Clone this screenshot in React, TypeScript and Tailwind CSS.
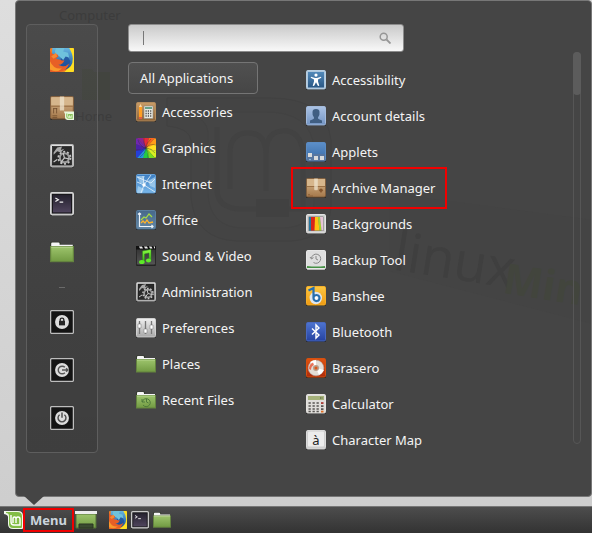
import type { ReactNode } from "react";

type IconProps = { className?: string };

function Svg({ className = "size-5", children }: { className?: string; children: ReactNode }) {
  return (
    <svg viewBox="0 0 20 20" className={`${className} shrink-0`} aria-hidden="true">
      {children}
    </svg>
  );
}

function Gradient({ id, from, to }: { id: string; from: string; to: string }) {
  return (
    <linearGradient id={id} x1="0" y1="0" x2="0" y2="1">
      <stop offset="0" stopColor={from} />
      <stop offset="1" stopColor={to} />
    </linearGradient>
  );
}

function SharedGradients() {
  return (
    <svg width="0" height="0" className="absolute" aria-hidden="true">
      <defs>
        <Gradient id="silver" from="#f0f0f0" to="#a8a8a8" />
        <Gradient id="wood" from="#c99d68" to="#8c6237" />
        <Gradient id="box" from="#d8b88e" to="#a5784a" />
        <Gradient id="sky" from="#3d7fc4" to="#79b7ea" />
        <Gradient id="steel" from="#46688b" to="#6487a5" />
        <Gradient id="leaf" from="#9dc46c" to="#719a42" />
        <Gradient id="coal" from="#303030" to="#555555" />
        <Gradient id="access" from="#5289b9" to="#2a5885" />
        <Gradient id="pale" from="#abc3e4" to="#7394c3" />
        <Gradient id="applet" from="#5c8fc9" to="#386aa5" />
        <Gradient id="amber" from="#fbc743" to="#ef9b13" />
        <Gradient id="blue" from="#4e74d0" to="#2542a0" />
        <Gradient id="orange" from="#df5310" to="#ad2b0c" />
        <Gradient id="night" from="#24212d" to="#51465f" />
        <Gradient id="globe" from="#67b6df" to="#164c9c" />
        <Gradient id="note" from="#8cff43" to="#2fa511" />
      </defs>
    </svg>
  );
}

function Tile({ fill, stroke = "#292929" }: { fill: string; stroke?: string }) {
  return (
    <>
      <rect x="0" y="1" width="20" height="19" rx="1.5" fill="#202020" />
      <rect x="0.5" y="0.5" width="19" height="18.5" rx="1.3" fill={fill} stroke={stroke} />
    </>
  );
}

function Firefox({ className }: IconProps) {
  return (
    <Svg className={className}>
      <rect width="20" height="20" rx="1" fill="#ef7d22" />
      <path d="M14 0h5q1 0 1 1v18q0 1-1 1h-7q6-5 6-11-1-5-4-9" fill="#ffdf22" />
      <path d="M2 0h14q3 5 3 9 0 7-6 9-8 1-10-6Q1 5 2 0" fill="url(#globe)" />
      <path d="M10 5q5 1 7 6-1 5-6 6-4-4-1-12" fill="#1b4a96" opacity=".7" />
      <path d="M5 0h7l-1 3 4 1 1 4-3-1-2 3-3-3-3-1-1-3z" fill="#6fc2dc" />
      <path d="M0 2q1 3 4 3 3 0 3 2L5 9l4 1q2 1 3 0-1 4-5 4 5 3 9-1-2 6-8 7H1q-1 0-1-1z" fill="#e75f26" />
      <path d="M0 11q3 7 10 6-4 4-10 1z" fill="#f99a2b" />
      <path d="M1 7l4-3 1 3-3 2z" fill="#f58a35" />
    </Svg>
  );
}

function PackageBox({ className, mint = false }: IconProps & { mint?: boolean }) {
  return (
    <Svg className={className}>
      <Tile fill="url(#box)" stroke="#82603f" />
      <path d="M1 1h18v7H1z" fill="#d6b68c" />
      <path d="M1 8.5h18" stroke="#9a7045" />
      <path d="M8.2.5h3.6v11l-.9.9-.9-.7-.9.7-.9-.9z" fill="#eee3ce" opacity=".75" />
      {mint ? (
        <>
          <path d="M3 10.5h3M3 10v4.5M5.5 10v4.5M2 16.5h4M2 18h4" stroke="#72502e" strokeWidth=".7" fill="none" />
          <path d="M11.5 13H20v7h-5.5q-2 0-2-2v-3z" fill="#e9f7db" />
          <path d="M14 14.5V17q0 1.5 1.5 1.5h3v-3h-3V17M17 15.5V17" fill="none" stroke="#88c158" strokeWidth=".9" />
        </>
      ) : (
        <path d="M14 11h2v1h1l-2 2.5L13 12h1zM2 16.5h2M2 18h5" fill="#84552d" stroke="#84552d" strokeWidth=".6" />
      )}
    </Svg>
  );
}

function Gears({ className }: IconProps) {
  return (
    <Svg className={className}>
      <Tile fill="url(#silver)" stroke="#b9b9b9" />
      <rect x="2" y="2" width="16" height="15.5" fill="#2a2a2a" stroke="#151515" strokeWidth=".5" />
      <path d="M3 7l3-4 4-1-1 3 3-1-3 3-3-1-3 3z" fill="#a9a9a9" />
      <circle cx="12" cy="11.5" r="3.8" fill="none" stroke="#9c9c9c" strokeWidth="1.7" />
      <circle cx="12" cy="11.5" r="5.1" fill="none" stroke="#c6c6c6" strokeWidth="1.4" strokeDasharray="1.7 1.5" />
      <path d="M12 11.5l-1-4M12 11.5l4 1M12 11.5l-3 4M3 15l3-2" stroke="#c6c6c6" />
    </Svg>
  );
}

function Terminal({ className }: IconProps) {
  return (
    <Svg className={className}>
      <Tile fill="#cecece" stroke="#d6d6d6" />
      <rect x="2" y="2" width="16" height="15.5" fill="url(#night)" stroke="#18171b" />
      <path d="M4.5 5l2.5 1.5L4.5 8M8 8.5h3" stroke="#f0f0f0" fill="none" />
    </Svg>
  );
}

function Folder({ className, recent = false }: IconProps & { recent?: boolean }) {
  return (
    <Svg className={className}>
      <path d="M0 2.5q0-1 1-1h7q1 0 1 1V4h10q1 0 1 1v12.5H0z" fill="#353b2f" />
      <path d="M1 3q0-1 1-1h5q1 0 1 1v1h11v3H1z" fill="#f5f5f5" />
      <rect x=".5" y="5.5" width="19" height="12.5" fill="url(#leaf)" stroke="#64833f" />
      <path d="M1 6h18" stroke="#b5d48d" />
      {recent && <path d="M6 9v3h3M6.3 12A4 4 0 1 1 7 15M10.5 9v3l2 1" fill="none" stroke="#4f7a3a" strokeWidth="1" />}
    </Svg>
  );
}

function SessionIcon({ kind }: { kind: "lock" | "logout" | "power" }) {
  return (
    <Svg className="size-6">
      <rect x=".5" y=".5" width="19" height="19" rx="1" fill="#141414" stroke="#bcbcbc" strokeWidth="1.1" />
      <circle cx="10" cy="10" r="5.8" fill="#dcdcdc" />
      {kind === "lock" && (
        <>
          <path d="M8.5 9.5V8q0-1.3 1.5-1.3T11.5 8v1.5" fill="none" stroke="#252525" strokeWidth="1.1" />
          <rect x="7.5" y="9" width="5" height="3.8" fill="#252525" />
        </>
      )}
      {kind === "logout" && <path d="M12.4 7.8A3.2 3.2 0 1 0 12.4 12.2M10 10H15.5M13.4 8.5L14.9 10l-1.5 1.5" fill="none" stroke="#555" strokeWidth="1.2" />}
      {kind === "power" && <path d="M8 7.3A3.3 3.3 0 1 0 12 7.3M10 5.5V9.8" fill="none" stroke="#4c4c4c" strokeWidth="1.2" />}
    </Svg>
  );
}

function Accessories() {
  return (
    <Svg>
      <Tile fill="url(#wood)" stroke="#b38c5e" />
      <path d="M3 5l1.5-3L6 5v12H3z" fill="#ff9f23" />
      <path d="M3 5l1.5-3L6 5z" fill="#f5d9ad" />
      <path d="M3 15h3v2H3z" fill="#e05b43" />
      <rect x="8" y="4" width="9" height="12.5" fill="#e9e9e2" stroke="#8b8b81" strokeWidth=".6" />
      <path d="M9 5h7v2H9z" fill="#68a189" />
      <path d="M9.5 9h6M9.5 11.5h6M9.5 14h6" stroke="#4c4c4c" strokeWidth="1.3" strokeDasharray="1.2 1.1" />
    </Svg>
  );
}

function Graphics() {
  return (
    <Svg>
      <path d="M10 10L1 0h7z" fill="#8a248f" />
      <path d="M10 10L7 0h6z" fill="#e62b39" />
      <path d="M10 10l3-10h6z" fill="#fb651d" />
      <path d="M10 10l9-10 1 1v6z" fill="#ff9d19" />
      <path d="M10 10l10-4v7z" fill="#ffdf22" />
      <path d="M10 10l10 3v6l-1 1z" fill="#d9ef22" />
      <path d="M10 10l9 10h-7z" fill="#79dc22" />
      <path d="M10 10l3 10H6z" fill="#24c943" />
      <path d="M10 10L7 20H1z" fill="#2593de" />
      <path d="M10 10L1 20l-1-1v-7z" fill="#253fd8" />
      <path d="M10 10L0 13V6z" fill="#4c21a7" />
      <path d="M10 10L0 6V1l1-1z" fill="#7026b1" />
      <path d="M10 10Q7 5 8 0M10 10q0-5 5-9M10 10q4-5 10-3M10 10q5 0 9 5M10 10q3 4 2 10M10 10q0 5-6 9M10 10q-4 3-10 2M10 10Q4 9 2 2" fill="none" stroke="#292929" strokeWidth=".35" />
    </Svg>
  );
}

function Internet() {
  return (
    <Svg>
      <Tile fill="url(#sky)" stroke="#69a2d6" />
      <path d="M1 2h8l-2 4 3 4-6-1zM12 7l7-4v11l-5-2zM2 12l6 3-2 4H1z" fill="#b6daf3" opacity=".65" />
      <path d="M1 8l7 3 7-10M8 11l11 7M8 11L5 19M8 11L7 2M1 3l14 6 4-4" fill="none" stroke="#e6f2fc" strokeWidth=".8" />
      <circle cx="8" cy="11" r="1.7" fill="#fff" />
    </Svg>
  );
}

function Office() {
  return (
    <Svg>
      <Tile fill="url(#steel)" stroke="#5b7f9f" />
      <path d="M3.5 3v13.5H17M2 4.5L3.5 3 5 4.5M15.5 15l1.5 1.5-1.5 1.5" fill="none" stroke="#edf3f8" strokeWidth="1.2" />
      <path d="M5 10l3-3 2 1 3-4 3 3" fill="none" stroke="#a9dc42" strokeWidth="1.2" />
      <path d="M5 13l2-2 2 2 2-3 2 3 4-1" fill="none" stroke="#ffb42a" strokeWidth="1.3" />
    </Svg>
  );
}

function SoundVideo() {
  return (
    <Svg>
      <Tile fill="url(#coal)" />
      <rect width="20" height="3.5" fill="#111" />
      <path d="M3 .5h3l1 2H4zM8 .5h3l1 2H9zM13 .5h2.5l1 2H14zM17.5.5H19v2h-.5z" fill="#ececec" />
      <path d="M6.5 5L15 3.5v11h-2V7L8.5 8v8.5h-2z" fill="url(#note)" stroke="#2c8b18" strokeWidth=".5" />
      <ellipse cx="5.8" cy="16" rx="2.8" ry="2" fill="#5de928" />
      <ellipse cx="12.5" cy="14.5" rx="2.6" ry="2" fill="#5de928" />
    </Svg>
  );
}

function Preferences() {
  return (
    <Svg>
      <Tile fill="url(#silver)" stroke="#cfcfcf" />
      <path d="M3.5 3v13M9.5 3v13M15.5 3v13" stroke="#777" strokeWidth="1.3" />
      <path d="M2 6h3v4H2zM8 11h3v4H8zM14 7h3v4h-3z" fill="#fff" stroke="#777" strokeWidth=".5" />
    </Svg>
  );
}

function Accessibility() {
  return (
    <Svg>
      <Tile fill="#adc7de" stroke="#b6cde0" />
      <rect x="2" y="2" width="16" height="15.5" fill="url(#access)" />
      <circle cx="10" cy="5.1" r="1.6" fill="#fff" />
      <path d="M5 6.8L9 8h2l4-1.2.3 1-3.3 1.6v2l1.3 4.3-1.3.4-2-3.8-2 3.8-1.3-.4L8 11.4v-2L4.7 7.8z" fill="#fff" />
    </Svg>
  );
}

function Account() {
  return (
    <Svg>
      <Tile fill="url(#pale)" stroke="#a3badb" />
      <path d="M6.5 6q0-3 3.5-3t3.5 3q.5 3-1.5 5.5v1q1 1 4 2V17H4v-2.5q3-1 4-2v-1Q6 9 6.5 6" fill="#405e82" />
    </Svg>
  );
}

function Applets() {
  return (
    <Svg>
      <Tile fill="url(#applet)" stroke="#5b8bc2" />
      <path d="M1 12h18v7H1z" fill="#5776a0" />
      <path d="M2 11h4v4H2zM8 14h4v4H8zM14 14h4v4h-4z" fill="#d8dadb" />
      <circle cx="4" cy="17.5" r=".8" fill="#9ed0ef" />
    </Svg>
  );
}

function Backgrounds() {
  return (
    <Svg>
      <Tile fill="#cfcfcf" stroke="#e2e2e2" />
      <rect x="2.5" y="2.5" width="15" height="14.5" fill="#777" />
      <path d="M3 3h2v13.5H3z" fill="#26769e" />
      <path d="M5 3h4v13.5H5z" fill="#d92519" />
      <path d="M9 3h3l1.5 13.5H8.5z" fill="#ffc112" />
      <path d="M12 3h2l1.5 13.5h-2z" fill="#a5d629" />
      <path d="M14 3h3v13.5h-1.5z" fill="#e8c5d7" />
    </Svg>
  );
}

function Backup() {
  return (
    <Svg>
      <Tile fill="#dedede" stroke="#e6e6e6" />
      <path d="M1 16q9 1 18 0v2H1z" fill="#469145" />
      <path d="M1 19h18" stroke="#eee" />
      <path d="M5.5 8.5A4.6 4.6 0 1 1 7.5 12.5M4 7l1.5 2 2-1.4M10 6v3l2 1" fill="none" stroke="#888" strokeWidth="1" />
    </Svg>
  );
}

function Banshee() {
  return (
    <Svg>
      <Tile fill="url(#amber)" stroke="#f6af27" />
      <circle cx="9.8" cy="12" r="6.2" fill="#dfe6ec" />
      <path d="M2.5 4.5L7.5 2v10M7.5 12a3 3 0 1 0 2-2.8q-2 .5-2 2.8" fill="none" stroke="#286ead" strokeWidth="2.2" />
      <circle cx="10.3" cy="12" r="1.5" fill="#fff" />
    </Svg>
  );
}

function Bluetooth() {
  return (
    <Svg>
      <Tile fill="url(#blue)" stroke="#4968bf" />
      <path d="M6 6.5l7 6.5-3 3V3l3 3-7 6.5" fill="none" stroke="#fff" strokeWidth="1.4" />
    </Svg>
  );
}

function Brasero() {
  return (
    <Svg>
      <Tile fill="url(#orange)" stroke="#d5500f" />
      <circle cx="10" cy="10" r="7.8" fill="#e3ddd5" stroke="#aaa" strokeWidth=".5" />
      <path d="M10 10L4 4q3-2 6-2zM10 10l8 2q-2 4-5 5z" fill="#fff" />
      <path d="M3 11q0-5 4-6.5L8 7Q5 8 5 12z" fill="#e8492a" opacity=".75" />
      <circle cx="10" cy="10" r="3" fill="#b79d88" />
      <circle cx="10" cy="10" r="1.5" fill="#df5719" />
    </Svg>
  );
}

function Calculator() {
  return (
    <Svg>
      <Tile fill="#dfddda" stroke="#e4e2df" />
      <path d="M2 2h16v4H2z" fill="#a5b17a" />
      <path d="M14.5 3v2M16 3v2" stroke="#59633e" strokeWidth=".6" />
      <path d="M2.5 9h11M2.5 12h11M2.5 15h11M2.5 17.5h11" stroke="#575451" strokeWidth="1.7" strokeDasharray="2.3 1.7" />
      <path d="M15 8.2h2.5v1.7H15z" fill="#a52e28" />
      <path d="M15 11.2h2.5v1.7H15zM15 14.2h2.5v1.7H15z" fill="#575451" />
      <path d="M15 16.7h2.5v1.8H15z" fill="#df6b20" />
    </Svg>
  );
}

function CharacterMap() {
  return (
    <Svg>
      <Tile fill="#cfcfcf" stroke="#dadada" />
      <rect x="2" y="1.5" width="16" height="15" rx="1" fill="#ececec" />
      <text x="10" y="14.5" textAnchor="middle" fontFamily="Noto Sans, sans-serif" fontSize="13" fill="#222">à</text>
    </Svg>
  );
}

function MintLogo() {
  return (
    <svg viewBox="0 0 20 20" className="size-5 shrink-0" aria-hidden="true">
      <path d="M0 1h14q5 0 5 5v12q0 1-1 1H9q-5 0-5-5V7Q4 5 0 4z" fill="#f2f8ec" />
      <path d="M2 2h11q5 0 5 4v11q0 1-1 1H9q-4 0-4-4V6Q5 3 2 3z" fill="#83bd46" />
      <path d="M7 5v7q0 3 3 3h6V9q0-2-2-2t-2 2v4M12 9q0-2-1.5-2T9 9v4" fill="none" stroke="#fff" strokeWidth="1.4" />
    </svg>
  );
}

function ShowDesktop() {
  return (
    <svg viewBox="0 0 22 18" className="h-[18px] w-[22px] shrink-0" aria-hidden="true">
      <path d="M1 3h20v14H1z" fill="url(#leaf)" stroke="#536f38" />
      <path d="M0 0h22v3H0z" fill="#ececec" />
      <path d="M4 13h14v4H4z" fill="#3a4a30" stroke="#2a3423" />
    </svg>
  );
}

/** The wallpaper and desktop items that show faintly through the menu. */
function Backdrop() {
  return (
    <div className="pointer-events-none absolute inset-0 overflow-hidden text-[13px]/4 text-[#3c3c3c]" aria-hidden="true">
      <span className="absolute top-[6px] left-[43px]">Computer</span>
      <span className="absolute top-[107px] left-[59px]">Home</span>
      <svg viewBox="0 0 577 497" className="absolute top-0 left-0 h-[497px] w-[577px]">
        <path d="M66 68h10l2 3h16v28H66z" fill="#42443f" />
        <path d="M151 97h104q55 0 60 42v69q-4 29-39 32h-56q-41-2-45-43v-57q-1-13-24-15z" fill="#444444" stroke="#414141" />
        <path d="M170 111h80q44 0 48 35v57q-2 22-29 24h-43q-32-1-34-34v-62q-1-14-22-20z" fill="#454545" stroke="#424242" />
        <path d="M201 126v62q0 20 25 20h61v-57q-3-23-22-21-15 2-15 22v38M250 153q0-21-18-21t-18 20v36" fill="none" stroke="#424242" strokeWidth="5" />
        <path d="M240 198h33v18h-33z" fill="#414141" />
        <path d="M373 192l204 27v104L373 270z" fill="#444444" />
        <g fontFamily="Open Sans, sans-serif" transform="rotate(9 374 268)">
          <text x="376" y="268" fontSize="54" fill="#3f3f3f">linux</text>
          <text x="488" y="274" fontSize="42" fontWeight="700" fill="#42453d">Min</text>
        </g>
      </svg>
    </div>
  );
}

type Entry = { label: string; icon: ReactNode; marked?: boolean };

const favourites: Entry[] = [
  { label: "Firefox", icon: <Firefox className="size-6" /> },
  { label: "Software Manager", icon: <PackageBox className="size-6" mint /> },
  { label: "System Settings", icon: <Gears className="size-6" /> },
  { label: "Terminal", icon: <Terminal className="size-6" /> },
  { label: "Files", icon: <Folder className="size-6" /> },
];

const session: Entry[] = [
  { label: "Lock screen", icon: <SessionIcon kind="lock" /> },
  { label: "Logout", icon: <SessionIcon kind="logout" /> },
  { label: "Quit", icon: <SessionIcon kind="power" /> },
];

const categories: Entry[] = [
  { label: "Accessories", icon: <Accessories /> },
  { label: "Graphics", icon: <Graphics /> },
  { label: "Internet", icon: <Internet /> },
  { label: "Office", icon: <Office /> },
  { label: "Sound & Video", icon: <SoundVideo /> },
  { label: "Administration", icon: <Gears /> },
  { label: "Preferences", icon: <Preferences /> },
  { label: "Places", icon: <Folder /> },
  { label: "Recent Files", icon: <Folder recent /> },
];

const applications: Entry[] = [
  { label: "Accessibility", icon: <Accessibility /> },
  { label: "Account details", icon: <Account /> },
  { label: "Applets", icon: <Applets /> },
  { label: "Archive Manager", icon: <PackageBox />, marked: true },
  { label: "Backgrounds", icon: <Backgrounds /> },
  { label: "Backup Tool", icon: <Backup /> },
  { label: "Banshee", icon: <Banshee /> },
  { label: "Bluetooth", icon: <Bluetooth /> },
  { label: "Brasero", icon: <Brasero /> },
  { label: "Calculator", icon: <Calculator /> },
  { label: "Character Map", icon: <CharacterMap /> },
];

function EntryButton({ label, icon, marked }: Entry) {
  return (
    <button type="button" className="relative flex h-9 items-center gap-[6px] whitespace-nowrap">
      {icon}
      <span>{label}</span>
      {marked && <span className="absolute -top-[3px] -left-[15px] h-[42px] w-[156px] border-2 border-[#f00000]" />}
    </button>
  );
}

function IconButton({ label, icon }: Entry) {
  return (
    <button type="button" aria-label={label} className="flex h-12 w-full items-center justify-center">
      {icon}
    </button>
  );
}

export default function App() {
  return (
    <div className="flex min-h-screen flex-col bg-linear-to-b from-[#dedede] to-[#cdcdcd] font-['Noto_Sans',sans-serif] text-[13px]/5 text-[#f4f4f4]">
      <SharedGradients />
      <main className="relative ml-[15px] rounded-[4px] border border-[#777] bg-[#454545]">
        <Backdrop />
        <div className="relative flex pt-[23px] pr-[10px] pb-[38px] pl-[10px]">
          <nav aria-label="Favourites" className="w-[72px] shrink-0 self-start rounded-[4px] border border-[#5e5e5e] bg-linear-to-b from-white/3 to-black/10 pt-[11px] pb-[10px]">
            {favourites.map((item) => (
              <IconButton key={item.label} {...item} />
            ))}
            <div className="flex h-[22px] items-center justify-center">
              <span className="h-px w-[6px] bg-[#6a6a6a]" />
            </div>
            {session.map((item) => (
              <IconButton key={item.label} {...item} />
            ))}
          </nav>
          <div className="ml-[30px] flex-1">
            <div className="flex h-7 w-[276px] items-center rounded-[3px] border border-[#8c8c8c] bg-linear-to-b from-[#cacaca] to-[#f8f8f8] pr-3 pl-[14px]">
              <span className="h-[14px] w-px bg-[#777]" />
              <input type="text" aria-label="Search applications" className="min-w-0 flex-1 bg-transparent text-[#333] outline-none" />
              <svg viewBox="0 0 12 12" className="size-3" aria-hidden="true">
                <circle cx="4.7" cy="4.7" r="3.5" fill="none" stroke="#969696" strokeWidth="1.5" />
                <path d="M7.5 7.5l4 4" stroke="#969696" strokeWidth="1.8" />
              </svg>
            </div>
            <div className="flex">
              <div className="mt-[10px] flex w-[130px] flex-col">
                <button type="button" className="h-8 rounded-[4px] border border-[#757575] bg-linear-to-b from-[#505050] to-[#464646] px-[11px] text-left">
                  All Applications
                </button>
                <div className="flex flex-col items-start pl-2">
                  {categories.map((item) => (
                    <EntryButton key={item.label} {...item} />
                  ))}
                </div>
              </div>
              <div className="mt-[10px] ml-12 flex flex-col items-start">
                {applications.map((item) => (
                  <EntryButton key={item.label} {...item} />
                ))}
              </div>
              <div className="ml-auto h-[392px] w-2 rounded-full border border-[#565656]">
                <div className="-mx-px -mt-px h-[43px] rounded-full bg-[#5c5c5c]" />
              </div>
            </div>
          </div>
        </div>
        <svg viewBox="0 0 20 10" className="absolute top-full left-[8px] h-[10px] w-5" aria-hidden="true">
          <path d="M0 0h20l-10 9z" fill="#454545" />
        </svg>
      </main>
      <footer className="mt-auto flex h-[27px] items-center border-t border-[#777] bg-linear-to-b from-[#4d4d4d] to-[#333] pl-[4px]">
        <MintLogo />
        <button type="button" className="-ml-px flex h-6 w-[51px] items-center justify-center border-2 border-[#f00000] font-bold text-[#cbd5dd]">
          Menu
        </button>
        <div className="ml-px flex items-center">
          <button type="button" aria-label="Show desktop">
            <ShowDesktop />
          </button>
          <div className="ml-3 flex items-center gap-1">
            <button type="button" aria-label="Firefox">
              <Firefox className="size-[18px]" />
            </button>
            <button type="button" aria-label="Terminal">
              <Terminal className="size-[18px]" />
            </button>
            <button type="button" aria-label="Files">
              <Folder className="size-[18px]" />
            </button>
          </div>
        </div>
      </footer>
    </div>
  );
}
